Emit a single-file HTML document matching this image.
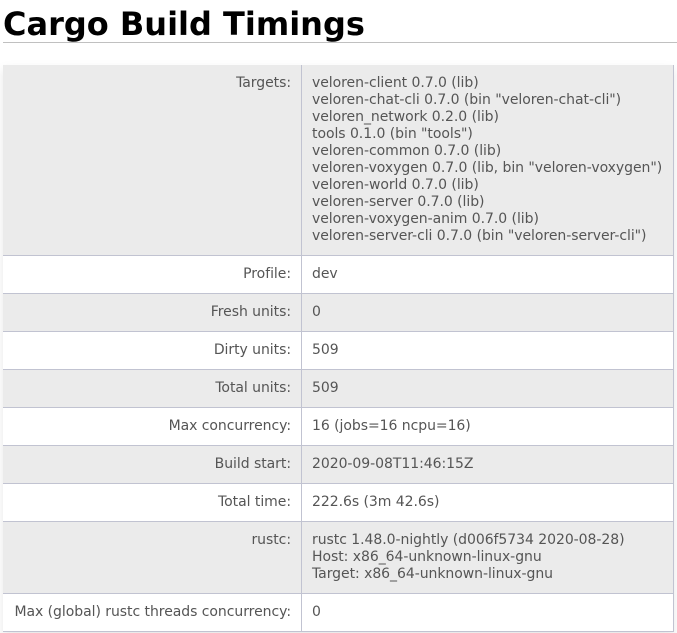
<!DOCTYPE html>
<html><head><style>
html,body{margin:0;padding:0;background:#fff;}
body{font-family:"DejaVu Sans",sans-serif;width:677px;height:633px;overflow:hidden;}
h1{margin:0 0 0 3px;width:674px;font-size:32px;font-weight:bold;height:43px;line-height:48px;border-bottom:1px solid #c0c0c0;box-sizing:border-box;color:#000;}
table{position:absolute;left:3px;top:65px;width:671px;border-collapse:collapse;table-layout:fixed;box-shadow:0 5px 10px rgba(0,0,0,.1);}
td{background:#fff;padding:10px;font-size:14px;line-height:17px;color:#555;border-right:1px solid #C1C3D1;vertical-align:top;white-space:nowrap;letter-spacing:-0.05px;overflow:hidden;}
tr{border-top:1px solid #C1C3D1;border-bottom:1px solid #C1C3D1;}
tr:nth-child(odd) td{background:#EBEBEB;}
td:first-child{text-align:right;width:278px;}
tr:first-child{border-top:none}
</style></head><body>
<h1>Cargo Build Timings</h1>
<table>
<tr><td>Targets:</td><td>veloren-client 0.7.0 (lib)<br>veloren-chat-cli 0.7.0 (bin "veloren-chat-cli")<br>veloren_network 0.2.0 (lib)<br>tools 0.1.0 (bin "tools")<br>veloren-common 0.7.0 (lib)<br>veloren-voxygen 0.7.0 (lib, bin "veloren-voxygen")<br>veloren-world 0.7.0 (lib)<br>veloren-server 0.7.0 (lib)<br>veloren-voxygen-anim 0.7.0 (lib)<br>veloren-server-cli 0.7.0 (bin "veloren-server-cli")</td></tr>
<tr><td>Profile:</td><td>dev</td></tr>
<tr><td>Fresh units:</td><td>0</td></tr>
<tr><td>Dirty units:</td><td>509</td></tr>
<tr><td>Total units:</td><td>509</td></tr>
<tr><td>Max concurrency:</td><td>16 (jobs=16 ncpu=16)</td></tr>
<tr><td>Build start:</td><td>2020-09-08T11:46:15Z</td></tr>
<tr><td>Total time:</td><td>222.6s (3m 42.6s)</td></tr>
<tr><td>rustc:</td><td>rustc 1.48.0-nightly (d006f5734 2020-08-28)<br>Host: x86_64-unknown-linux-gnu<br>Target: x86_64-unknown-linux-gnu</td></tr>
<tr><td>Max (global) rustc threads concurrency:</td><td>0</td></tr>
</table>
</body></html>
